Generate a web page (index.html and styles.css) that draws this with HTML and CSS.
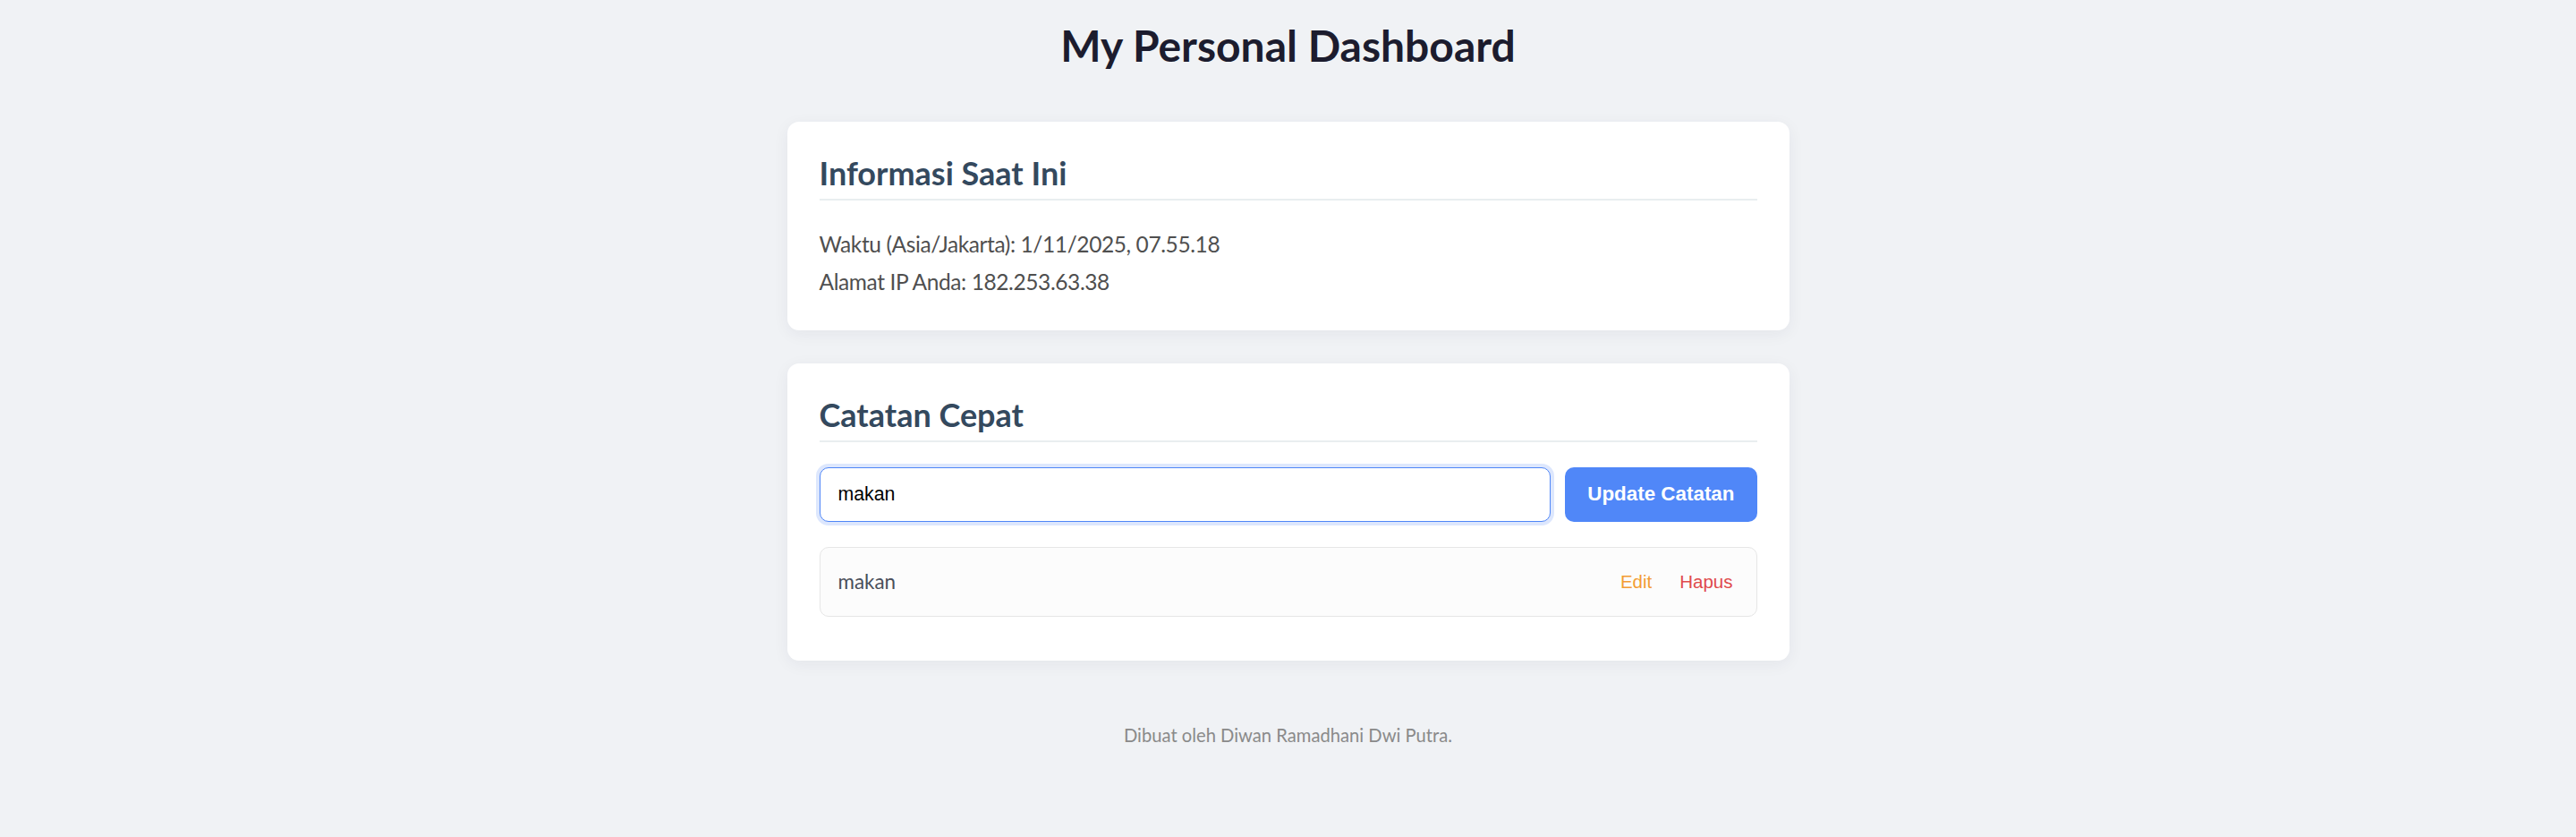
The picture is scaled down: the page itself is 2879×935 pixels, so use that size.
FILE: index.html
```html
<!DOCTYPE html>
<html lang="id">
<head>
<meta charset="utf-8">
<title>My Personal Dashboard</title>
<link rel="stylesheet" href="styles.css">
</head>
<body>
<main class="page">
  <h1 class="title">My Personal Dashboard</h1>

  <section class="card">
    <h2 class="card-title">Informasi Saat Ini</h2>
    <div class="info">
      <p class="info-line">Waktu (Asia/Jakarta): 1/11/2025, 07.55.18</p>
      <p class="info-line">Alamat IP Anda: 182.253.63.38</p>
    </div>
  </section>

  <section class="card">
    <h2 class="card-title">Catatan Cepat</h2>
    <form class="note-form">
      <input class="note-input" type="text" value="makan">
      <button class="note-submit" type="button">Update Catatan</button>
    </form>
    <ul class="note-list">
      <li class="note-item">
        <span class="note-text">makan</span>
        <span class="note-actions">
          <button class="note-btn note-edit" type="button">Edit</button>
          <button class="note-btn note-delete" type="button">Hapus</button>
        </span>
      </li>
    </ul>
  </section>

  <footer class="footer">Dibuat oleh Diwan Ramadhani Dwi Putra.</footer>
</main>
</body>
</html>
```
FILE: styles.css
```css
* { box-sizing: border-box; }

body {
  margin: 0;
  background: #f0f2f5;
  font-family: "Lato", "Open Sans", sans-serif;
  color: #4f4f4f;
}

.page {
  width: 1120px;
  margin: 0 auto;
  padding-top: 22px;
}

.title {
  margin: 0 0 56px;
  text-align: center;
  font-size: 48px;
  line-height: 1.2;
  font-weight: 700;
  color: #1c1c2e;
}

.card {
  background: #ffffff;
  border-radius: 13px;
  padding: 36px 36px 33px;
  box-shadow: 0 4px 18px rgba(30, 40, 60, 0.06);
}

.card + .card {
  margin-top: 37px;
}

.card-title {
  margin: 0 0 28px;
  padding-bottom: 8px;
  border-bottom: 2px solid #e9eef0;
  font-size: 36px;
  line-height: 42px;
  font-weight: 700;
  color: #34495e;
}

.info-line {
  margin: 0;
  font-size: 24.5px;
  letter-spacing: -0.4px;
  line-height: 42px;
}

.note-form {
  display: flex;
  gap: 16px;
}

.note-input {
  flex: 1;
  height: 61px;
  padding: 0 20px;
  border: 1px solid #4f86f7;
  border-radius: 10px;
  box-shadow: 0 0 0 4px #dde7fd;
  font-family: "Liberation Sans", Arial, sans-serif;
  font-size: 21.3px;
  color: #000;
  outline: none;
  background: #fff;
}

.note-submit {
  height: 61px;
  padding: 0 25px;
  border: none;
  border-radius: 10px;
  background: #5087f8;
  color: #fff;
  font-family: "Liberation Sans", Arial, sans-serif;
  font-size: 22.4px;
  font-weight: 700;
}

.note-list {
  list-style: none;
  margin: 28px 0 16px;
  padding: 0;
}

.note-item {
  display: flex;
  align-items: center;
  justify-content: space-between;
  height: 78px;
  padding: 0 18px 0 20px;
  background: #fcfcfc;
  border: 1px solid #e6e6e6;
  border-radius: 10px;
}

.note-text {
  font-size: 22.4px;
  color: #4a4f5a;
}

.note-actions {
  display: flex;
  gap: 15px;
}

.note-btn {
  padding: 4px 8px;
  border: none;
  background: none;
  font-family: "Liberation Sans", Arial, sans-serif;
  font-size: 20.5px;
}

.note-edit { color: #f39c34; }
.note-delete { color: #e04b4b; }

.footer {
  margin-top: 71px;
  text-align: center;
  font-size: 20.2px;
  line-height: 1.2;
  color: #8a8a8a;
}
```
